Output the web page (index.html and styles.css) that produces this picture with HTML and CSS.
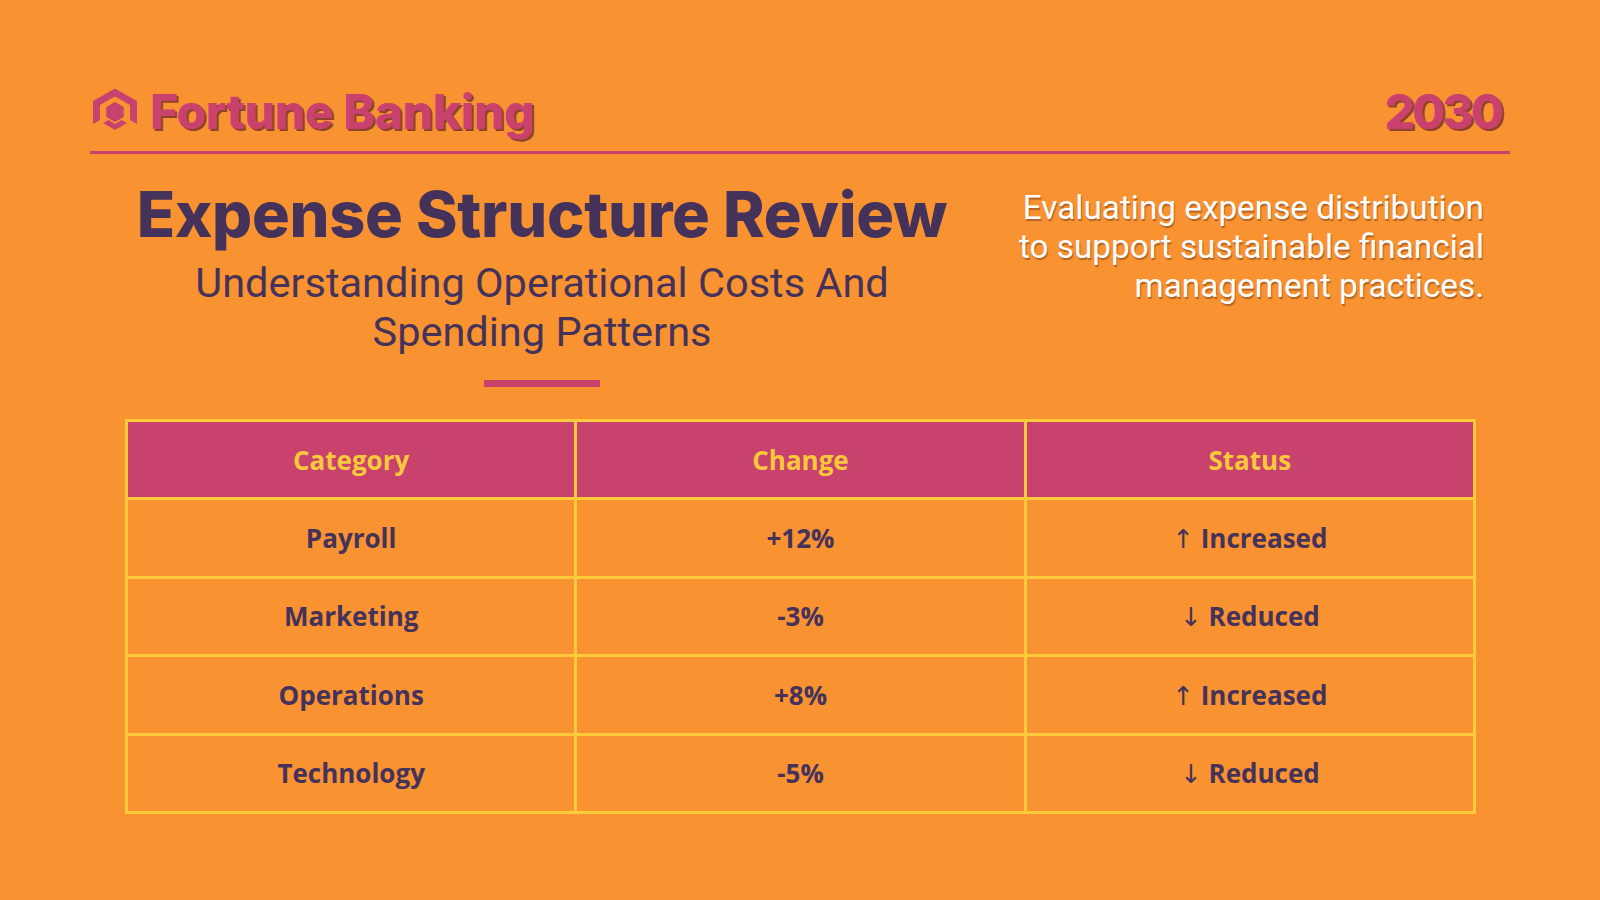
FILE: index.html
```html
<!DOCTYPE html>
<html lang="en">
<head>
<meta charset="utf-8">
<title>Expense Structure Review</title>
<link rel="stylesheet" href="styles.css">
</head>
<body>
<div class="slide">
  <header class="topbar">
    <div class="brand">
      <svg class="brand-icon" viewBox="0 0 50 50" aria-hidden="true">
        <polygon points="3,13 25,0.5 47,13 47,36 40,32 40,17 25,8.5 10,17 10,32 3,36" />
        <polygon points="25,14 33.7,19 33.7,29 25,34 16.3,29 16.3,19" />
        <polygon points="13,35 18.5,32 25,36 31.5,32 37,35 25,42" />
      </svg>
      <span class="brand-name">Fortune Banking</span>
    </div>
    <div class="year">2030</div>
  </header>

  <section class="intro">
    <div class="intro-main">
      <h1 class="title">Expense Structure Review</h1>
      <p class="subtitle">Understanding Operational Costs And<br>Spending Patterns</p>
      <div class="accent-bar"></div>
    </div>
    <p class="intro-note">Evaluating expense distribution<br>to support sustainable financial<br>management practices.</p>
  </section>

  <table class="data-table">
    <thead>
      <tr><th>Category</th><th>Change</th><th>Status</th></tr>
    </thead>
    <tbody>
      <tr><td>Payroll</td><td>+12%</td><td><span class="arrow">↑</span> Increased</td></tr>
      <tr><td>Marketing</td><td>-3%</td><td><span class="arrow">↓</span> Reduced</td></tr>
      <tr><td>Operations</td><td>+8%</td><td><span class="arrow">↑</span> Increased</td></tr>
      <tr><td>Technology</td><td>-5%</td><td><span class="arrow">↓</span> Reduced</td></tr>
    </tbody>
  </table>
</div>
</body>
</html>
```

FILE: styles.css
```css
* { box-sizing: border-box; }

html, body {
  margin: 0;
  padding: 0;
}

body {
  background: #f99331;
  width: 1600px;
  height: 900px;
  overflow: hidden;
}

.slide {
  width: 1600px;
  height: 900px;
  padding: 88px 90px 0 90px;
}

.topbar {
  display: flex;
  align-items: flex-start;
  justify-content: space-between;
  height: 66px;
  padding: 0 9px 0 0;
  border-bottom: 3px solid #c9416d;
}

.brand {
  display: flex;
  align-items: flex-start;
  gap: 10px;
}

.brand-icon {
  width: 50px;
  height: 50px;
  fill: #c8426f;
  display: block;
}

.brand-name,
.year {
  font-family: "Inter", "Liberation Sans", sans-serif;
  font-weight: 800;
  font-size: 48px;
  letter-spacing: -0.4px;
  color: #c9416d;
  text-shadow: 2px 2px 0 rgba(110, 40, 40, 0.75);
  line-height: 1;
}

.year {
  letter-spacing: -3px;
}

.intro {
  display: flex;
  align-items: flex-start;
  margin: 22px 0 0 35px;
  width: 1359px;
}

.intro-main {
  width: 834px;
  display: flex;
  flex-direction: column;
  align-items: center;
  text-align: center;
}

.title {
  margin: 0;
  font-family: "Inter", "Liberation Sans", sans-serif;
  font-weight: 800;
  font-size: 63px;
  letter-spacing: -0.3px;
  line-height: 76px;
  color: #45325a;
}

.subtitle {
  margin: 6px 0 0 0;
  font-family: "Roboto", "Liberation Sans", sans-serif;
  font-weight: 400;
  font-size: 41.5px;
  line-height: 49px;
  color: #45325a;
}

.accent-bar {
  width: 116px;
  height: 7px;
  background: #c9416d;
  margin-top: 24px;
}

.intro-note {
  flex: 1;
  margin: 12px 0 0 0;
  text-align: right;
  font-family: "Roboto", "Liberation Sans", sans-serif;
  font-size: 33.3px;
  line-height: 39px;
  color: #ffffff;
  text-shadow: 1px 2px 1px rgba(90, 40, 20, 0.45);
}

.data-table {
  margin: 32px 0 0 35px;
  width: 1351px;
  border-collapse: collapse;
  table-layout: fixed;
  font-family: "Open Sans", "Liberation Sans", sans-serif;
  font-weight: 700;
  font-size: 26px;
}

.data-table th,
.data-table td {
  border: 3px solid #fdcb39;
  height: 78.4px;
  text-align: center;
  vertical-align: middle;
  padding: 0;
}

.data-table th {
  background: #c9416d;
  color: #f9c93c;
  font-weight: 700;
}

.data-table td {
  color: #45325a;
}

.arrow {
  font-family: "DejaVu Sans", sans-serif;
  font-weight: 400;
}
```
